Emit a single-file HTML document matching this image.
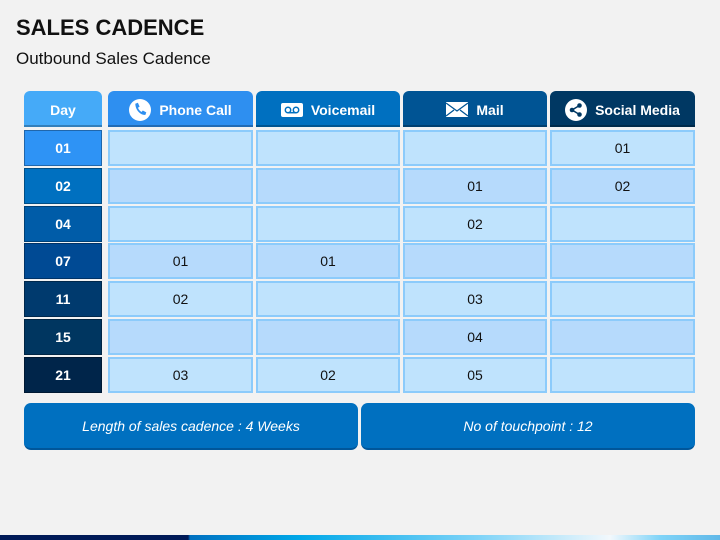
<!DOCTYPE html>
<html><head><style>
body{margin:0;width:720px;height:540px;background:#f2f2f2;position:relative;overflow:hidden;font-family:"Liberation Sans",sans-serif}
.a{position:absolute;box-sizing:border-box}
.h{top:91px;height:36px;padding-top:3px;border-radius:6px 6px 0 0;color:#fff;font-weight:bold;font-size:14px;display:flex;align-items:center;justify-content:center;gap:8px;border-bottom:2px solid rgba(0,0,0,.25)}
.d{left:24px;width:78px;height:36px;color:#fff;font-weight:bold;font-size:14px;display:flex;align-items:center;justify-content:center;border:1px solid rgba(0,0,0,.3)}
.c{height:36px;border:2px solid #8ccbfb;display:flex;align-items:center;justify-content:center;font-size:14px;color:#111}
.f{top:403px;height:47px;background:#0070c0;border-radius:7px;color:#fff;font-style:italic;font-size:14px;display:flex;align-items:center;justify-content:center;border-bottom:2px solid #00569a}
</style></head><body>
<div class="a" style="left:16px;top:15px;font-size:22px;font-weight:bold;color:#111">SALES CADENCE</div>
<div class="a" style="left:16px;top:49px;font-size:17px;color:#111">Outbound Sales Cadence</div>

<div class="a h" style="left:24px;width:78px;background:#45aaf8">Day</div>
<div class="a h" style="left:108px;width:145px;background:#2e8ff0"><svg width="22" height="22" viewBox="0 0 22 22"><circle cx="11" cy="11" r="11" fill="#fff"/><path d="M6.3 4.8l2.6-1 1.7 3.8-1.6 1.2c.7 1.9 1.9 3.3 3.5 4.2l1.3-1.5 3.5 1.9-1 2.6c-5.3 0-9.8-5-10-11.2z" fill="#2e8ff0"/></svg>Phone Call</div>
<div class="a h" style="left:256px;width:144px;background:#0070c0"><svg width="22" height="14" viewBox="0 0 22 14"><rect width="22" height="14" rx="2" fill="#fff"/><circle cx="7" cy="7" r="2.7" fill="none" stroke="#0070c0" stroke-width="1.5"/><circle cx="15" cy="7" r="2.7" fill="none" stroke="#0070c0" stroke-width="1.5"/><path d="M7 9.7h8" stroke="#0070c0" stroke-width="1.5"/></svg>Voicemail</div>
<div class="a h" style="left:403px;width:144px;background:#005494"><svg width="22" height="15" viewBox="0 0 22 15"><rect width="22" height="15" fill="#fff"/><path d="M0 1l11 8 11-8M0 14l8-6M22 14l-8-6" fill="none" stroke="#005494" stroke-width="1.3"/></svg>Mail</div>
<div class="a h" style="left:550px;width:145px;background:#003863"><svg width="22" height="22" viewBox="0 0 22 22"><circle cx="11" cy="11" r="11" fill="#fff"/><circle cx="14.5" cy="6.5" r="2.3" fill="#003863"/><circle cx="14.5" cy="15.5" r="2.3" fill="#003863"/><circle cx="7" cy="11" r="2.3" fill="#003863"/><path d="M14.5 6.5L7 11l7.5 4.5" stroke="#003863" stroke-width="1.5" fill="none"/></svg>Social Media</div>

<div class="a d" style="top:130px;background:#2e93f5">01</div>
<div class="a d" style="top:168px;background:#0070c0">02</div>
<div class="a d" style="top:206px;background:#005ca8">04</div>
<div class="a d" style="top:243px;background:#004a94">07</div>
<div class="a d" style="top:281px;background:#003a6e">11</div>
<div class="a d" style="top:319px;background:#003660">15</div>
<div class="a d" style="top:357px;background:#00254a">21</div>

<div id="g"></div>
<script>
var rows=[130,168,206,243,281,319,357],cols=[[108,145],[256,144],[403,144],[550,145]];
var v=[["","","","01"],["","","01","02"],["","","02",""],["01","01","",""],["02","","03",""],["","","04",""],["03","02","05",""]];
var h="";rows.forEach(function(t,i){cols.forEach(function(c,j){h+='<div class="a c" style="top:'+t+'px;left:'+c[0]+'px;width:'+c[1]+'px;background:'+(i%2?'#b6dafc':'#bfe3fd')+'">'+v[i][j]+'</div>';});});
document.getElementById("g").innerHTML=h;
</script>

<div class="a f" style="left:24px;width:334px">Length of sales cadence : 4 Weeks</div>
<div class="a f" style="left:361px;width:334px">No of touchpoint : 12</div>

<div class="a" style="left:0;top:535px;width:720px;height:5px;background:linear-gradient(90deg,#001a57 0,#001a57 188px,#0070c0 190px,#00a8e8 300px,#80d4f8 480px,#f2f8fc 610px,#80d4f8 660px,#60b8e8 720px)"></div>
</body></html>
